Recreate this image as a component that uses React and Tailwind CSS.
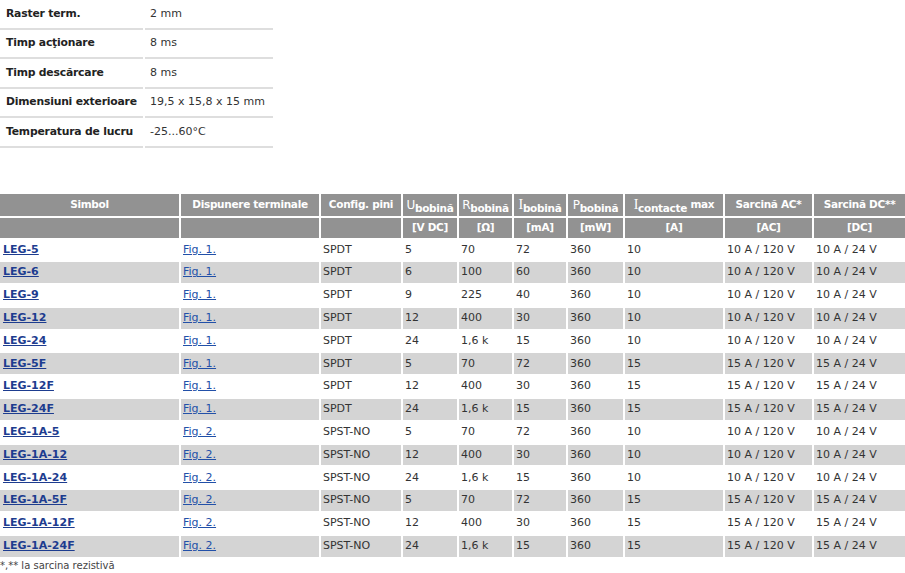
import React from "react";

const specs = [
  ["Raster term.", "2 mm"],
  ["Timp acţionare", "8 ms"],
  ["Timp descărcare", "8 ms"],
  ["Dimensiuni exterioare", "19,5 x 15,8 x 15 mm"],
  ["Temperatura de lucru", "-25...60°C"],
];

const rows = [
  ["LEG-5", "Fig. 1.", "SPDT", "5", "70", "72", "360", "10", "10 A / 120 V", "10 A / 24 V"],
  ["LEG-6", "Fig. 1.", "SPDT", "6", "100", "60", "360", "10", "10 A / 120 V", "10 A / 24 V"],
  ["LEG-9", "Fig. 1.", "SPDT", "9", "225", "40", "360", "10", "10 A / 120 V", "10 A / 24 V"],
  ["LEG-12", "Fig. 1.", "SPDT", "12", "400", "30", "360", "10", "10 A / 120 V", "10 A / 24 V"],
  ["LEG-24", "Fig. 1.", "SPDT", "24", "1,6 k", "15", "360", "10", "10 A / 120 V", "10 A / 24 V"],
  ["LEG-5F", "Fig. 1.", "SPDT", "5", "70", "72", "360", "15", "15 A / 120 V", "15 A / 24 V"],
  ["LEG-12F", "Fig. 1.", "SPDT", "12", "400", "30", "360", "15", "15 A / 120 V", "15 A / 24 V"],
  ["LEG-24F", "Fig. 1.", "SPDT", "24", "1,6 k", "15", "360", "15", "15 A / 120 V", "15 A / 24 V"],
  ["LEG-1A-5", "Fig. 2.", "SPST-NO", "5", "70", "72", "360", "10", "10 A / 120 V", "10 A / 24 V"],
  ["LEG-1A-12", "Fig. 2.", "SPST-NO", "12", "400", "30", "360", "10", "10 A / 120 V", "10 A / 24 V"],
  ["LEG-1A-24", "Fig. 2.", "SPST-NO", "24", "1,6 k", "15", "360", "10", "10 A / 120 V", "10 A / 24 V"],
  ["LEG-1A-5F", "Fig. 2.", "SPST-NO", "5", "70", "72", "360", "15", "15 A / 120 V", "15 A / 24 V"],
  ["LEG-1A-12F", "Fig. 2.", "SPST-NO", "12", "400", "30", "360", "15", "15 A / 120 V", "15 A / 24 V"],
  ["LEG-1A-24F", "Fig. 2.", "SPST-NO", "24", "1,6 k", "15", "360", "15", "15 A / 120 V", "15 A / 24 V"],
];

const widths = [179, 138, 80, 54, 53, 52, 55, 98, 87, 91];

function Sub({ main, sub, serif }) {
  return (
    <span className="whitespace-nowrap">
      <span className={serif ? "font-normal font-['Liberation_Serif',serif] text-[14px]" : "font-normal text-[12px]"}>
        {main}
      </span>
      <span className="relative top-[3px] text-[10.5px]">{sub}</span>
    </span>
  );
}

export default function App() {
  const th = "bg-[#929292] text-white font-bold text-center p-0 align-middle";
  return (
    <div className="w-[905px] font-['DejaVu_Sans',sans-serif] text-[11px] text-[#333]">
      <div className="grid w-[273px] grid-cols-[143px_128px] gap-x-[2px]">
        {specs.map(([k, v]) => (
          <React.Fragment key={k}>
            <div className="flex h-[29.5px] items-center border-b-2 border-[#dedede] pl-[6px] font-bold text-[10.8px] tracking-[-0.2px] text-[#222]">
              {k}
            </div>
            <div className="flex h-[29.5px] items-center border-b-2 border-[#dedede] pl-[5px]">
              {v}
            </div>
          </React.Fragment>
        ))}
      </div>

      <div className="-mx-[2px] mt-[44px]">
        <table className="w-[909px] table-fixed border-separate border-spacing-[2px]">
          <colgroup>
            {widths.map((w, i) => (
              <col key={i} style={{ width: w }} />
            ))}
          </colgroup>
          <thead className="text-[10.5px] tracking-[-0.3px]">
            <tr className="h-[22px]">
              <th className={th}>Simbol</th>
              <th className={th}>Dispunere terminale</th>
              <th className={th}>Config. pini</th>
              <th className={th}><Sub main="U" sub="bobină" /></th>
              <th className={th}><Sub main="R" sub="bobină" /></th>
              <th className={th}><Sub main="I" sub="bobină" serif /></th>
              <th className={th}><Sub main="P" sub="bobină" /></th>
              <th className={th}>
                <Sub main="I" sub="contacte" serif /> <span className="relative -top-[1px]">max</span>
              </th>
              <th className={th}>Sarcină AC*</th>
              <th className={th}>Sarcină DC**</th>
            </tr>
            <tr className="h-[20px]">
              <th className={th}></th>
              <th className={th}></th>
              <th className={th}></th>
              <th className={th}>[V DC]</th>
              <th className={th}>[Ω]</th>
              <th className={th}>[mA]</th>
              <th className={th}>[mW]</th>
              <th className={th}>[A]</th>
              <th className={th}>[AC]</th>
              <th className={th}>[DC]</th>
            </tr>
          </thead>
          <tbody>
            {rows.map((r, i) => (
              <tr key={r[0]} className={i % 2 ? "h-[20.8px] bg-[#d4d4d4]" : "h-[20.8px] bg-white"}>
                <td className="p-0 pl-[3px] align-middle">
                  <a href="#" className="font-bold text-[#1d3c8f] underline">{r[0]}</a>
                </td>
                <td className="p-0 pl-[2px] align-middle">
                  <a href="#" className="text-[#2250a8] underline">{r[1]}</a>
                </td>
                {r.slice(2).map((c, j) => (
                  <td key={j} className="p-0 pl-[2px] align-middle whitespace-nowrap">
                    {c}
                  </td>
                ))}
              </tr>
            ))}
          </tbody>
        </table>
      </div>
      <div className="text-[10px] leading-[14px] text-[#444]">*,** la sarcina rezistivă</div>
    </div>
  );
}
